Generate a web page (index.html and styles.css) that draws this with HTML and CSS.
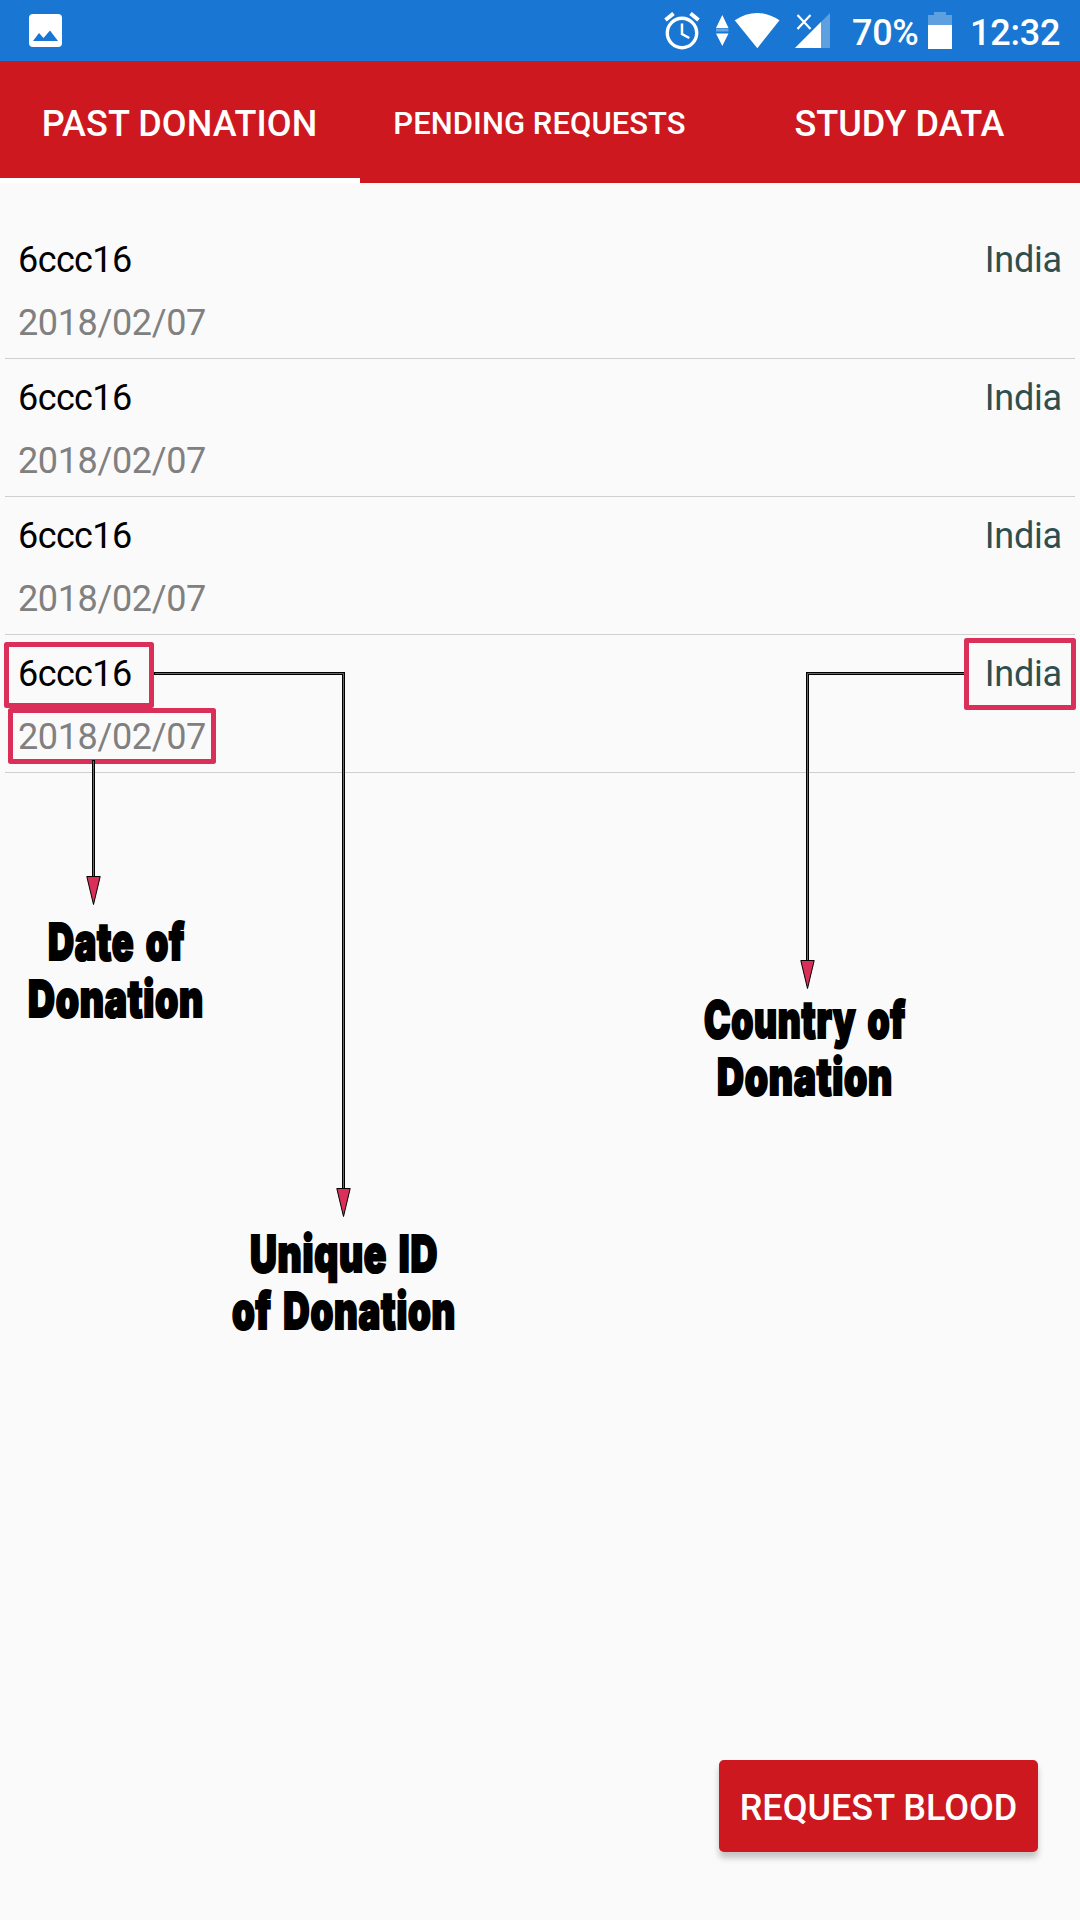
FILE: index.html
```html
<!DOCTYPE html>
<html lang="en">
<head>
<meta charset="utf-8">
<title>Past Donation</title>
<link rel="stylesheet" href="styles.css">
</head>
<body>
<div class="screen">
  <header class="status">
    <svg class="photo" width="33" height="33" viewBox="0 0 33 33"><rect width="33" height="33" rx="4" fill="#fff"/><path d="M4 27L10 19L14.500 24L21 16.500L29 27Z" fill="#1976d2"/></svg>
    <div class="status-right">
      <svg class="alarm" width="36" height="38" viewBox="0 0 36 38" fill="none" stroke="#fff"><circle cx="18" cy="21" r="14.700" stroke-width="3.400"/><path d="M1.500 8L9.500 1.500M34.500 8L26.500 1.500" stroke-width="4"/><path d="M18 11.500V22L25.300 26" stroke-width="2.500"/></svg>
      <svg class="wifi" width="66" height="38" viewBox="0 0 66 38" fill="#fff"><path d="M1 16L7.300 3L13.500 16ZM1 21.500H13.500L7.300 34Z"/><path d="M1 16.500H13.500V19.500H1Z" opacity=".35"/><path d="M19.700 8.300Q42 -6.500 64.500 8.300L42.300 36.200Z"/></svg>
      <svg class="signal" width="35" height="38" viewBox="0 0 35 38"><path d="M0 36L35 1V36Z" fill="#fff" opacity=".3"/><path d="M0 36L26 10V36Z" fill="#fff"/><path d="M2.500 3L15.500 17M15.500 3L2.500 17" stroke="#fff" stroke-width="2.200"/></svg>
      <span class="percent">70%</span>
      <svg class="battery" width="24" height="37" viewBox="0 0 24 37"><path d="M0 3H6V0H18V3H24V13H0Z" fill="#fff" opacity=".3"/><path d="M0 13H24V37H0Z" fill="#fff"/></svg>
      <span class="clock">12:32</span>
    </div>
  </header>
  <nav class="tabs">
    <div class="tab active"><span class="tab-past">PAST DONATION</span></div>
    <div class="tab"><span class="tab-pending">PENDING REQUESTS</span></div>
    <div class="tab"><span class="tab-study">STUDY DATA</span></div>
  </nav>
  <main class="list">
    <article class="row"><span class="id">6ccc16</span><span class="country">India</span><span class="date">2018/02/07</span></article>
    <article class="row"><span class="id">6ccc16</span><span class="country">India</span><span class="date">2018/02/07</span></article>
    <article class="row"><span class="id">6ccc16</span><span class="country">India</span><span class="date">2018/02/07</span></article>
    <article class="row"><span class="id">6ccc16</span><span class="country">India</span><span class="date">2018/02/07</span></article>
  </main>
  <footer class="actions"><button class="request">REQUEST BLOOD</button></footer>

  <svg class="notes" width="1080" height="1920" viewBox="0 0 1080 1920">
    <g class="box">
      <rect x="6.500" y="644.500" width="145" height="61"/>
      <rect x="10.500" y="710.500" width="203" height="51"/>
      <rect x="966.500" y="640.500" width="107" height="67"/>
    </g>
    <g class="line-edge"><path d="M154 673.500H343.500V1188"/><path d="M93.500 760V876"/><path d="M964 673.500H807.500V960"/></g>
    <g class="line-core"><path d="M155 673.500H343.500V1188"/><path d="M93.500 761V876"/><path d="M964 673.500H807.500V960"/></g>
    <g class="head"><path d="M336.800 1188.500H350.200L343.500 1216.500Z"/><path d="M86.800 876.500H100.200L93.500 904.500Z"/><path d="M800.800 960.500H814.200L807.500 988.500Z"/></g>
    <g class="label">
      <text x="48" y="959.500" textLength="137" lengthAdjust="spacingAndGlyphs">Date of</text>
      <text x="28" y="1016.500" textLength="176" lengthAdjust="spacingAndGlyphs">Donation</text>
      <text x="250" y="1271.500" textLength="188" lengthAdjust="spacingAndGlyphs">Unique ID</text>
      <text x="232" y="1328.500" textLength="224" lengthAdjust="spacingAndGlyphs">of Donation</text>
      <text x="704" y="1037.500" textLength="202" lengthAdjust="spacingAndGlyphs">Country of</text>
      <text x="717" y="1094.500" textLength="176" lengthAdjust="spacingAndGlyphs">Donation</text>
    </g>
  </svg>
</div>
</body>
</html>
```
FILE: styles.css
```css
* { box-sizing: border-box; }
body { margin: 0; font-family: Roboto, sans-serif; background: #fafafa; }
.screen { position: relative; width: 1080px; height: 1920px; display: flex; flex-direction: column; overflow: hidden; }
.status { height: 61px; flex: none; background: #1976d2; color: #fff; display: flex; justify-content: space-between; align-items: flex-start; padding: 0 20px 0 29px; font-size: 36px; font-weight: 500; line-height: 42px; }
.photo { margin-top: 14px; }
.status-right { display: flex; align-items: flex-start; }
.status-right svg { flex: none; margin-top: 12px; }
.wifi { margin-left: 15px; }
.signal { margin-left: 14px; }
.percent { margin: 12px 0 0 22px; width: 66px; white-space: nowrap; letter-spacing: -.3px; }
.battery { margin-left: 10px; }
.clock { margin: 12px 0 0 18px; width: 90px; white-space: nowrap; letter-spacing: -.2px; }
.tabs { height: 122px; flex: none; background: #cc181e; display: grid; grid-template-columns: repeat(3, 1fr); color: #fff; font-weight: 500; font-size: 36px; line-height: 42px; }
.tab { display: flex; align-items: center; justify-content: center; border-bottom: 5px solid transparent; padding-top: 9px; white-space: nowrap; }
.tab.active { border-bottom-color: #fff; }
.tab-past { letter-spacing: .1px; margin-left: -1px; }
.tab-pending { font-size: 31px; letter-spacing: .05px; margin-left: -1px; }
.tab-study { margin-left: -1px; }
.list { padding: 38px 5px 0; flex: 1; }
.row { height: 138px; padding: 18px 13px 14px; border-bottom: 1px solid #cfcfcf; display: grid; grid-template-columns: 1fr auto; grid-template-rows: 42px 42px; row-gap: 21px; font-size: 36px; line-height: 42px; }
.id { color: #000; letter-spacing: -.6px; }
.country { color: #2f4f4f; letter-spacing: -.2px; }
.date { color: #808080; letter-spacing: -.36px; }
.actions { flex: none; display: flex; justify-content: flex-end; padding: 0 42px 68px 0; }
.request { width: 319px; height: 92px; border: 0; border-radius: 5px; background: #cc181e; color: #fff; font: 500 36px/42px Roboto, sans-serif; padding: 4px 0 0; white-space: nowrap; box-shadow: 0 6px 6px rgba(0, 0, 0, .22); }
.notes { position: absolute; left: 0; top: 0; }
.box { fill: none; stroke: #d92f59; stroke-width: 5; stroke-linejoin: round; }
.line-edge { fill: none; stroke: #000; stroke-width: 3; }
.line-core { fill: none; stroke: #d92f59; stroke-width: 1; }
.head { fill: #d92f59; stroke: #000; stroke-width: 1; }
.label { font-family: Inter, sans-serif; font-weight: 900; font-size: 51px; letter-spacing: 1px; word-spacing: 5px; fill: #000; stroke: #000; stroke-width: 2.2px; }
```
